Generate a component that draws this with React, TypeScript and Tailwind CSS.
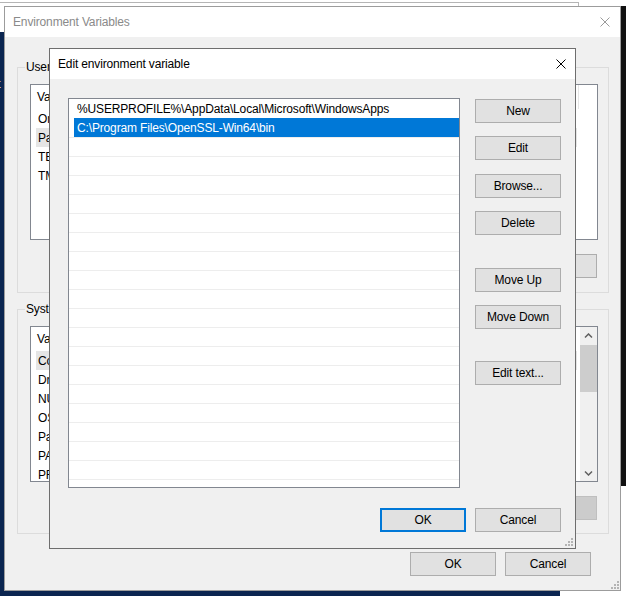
import React from 'react'

type Variant = 'normal' | 'default' | 'disabled'

function Button({ label, variant = 'normal', className = '' }: { label: string; variant?: Variant; className?: string }) {
  const look =
    variant === 'default'
      ? 'border-2 border-[#0078d7] bg-[#e1e1e1]'
      : variant === 'disabled'
        ? 'border border-[#bfbfbf] bg-[#cccccc] text-[#838383]'
        : 'border border-[#adadad] bg-[#e1e1e1]'
  return (
    <button
      type="button"
      className={`flex h-[24px] w-[86px] shrink-0 items-center justify-center whitespace-nowrap ${look} ${className}`}
    >
      {label}
    </button>
  )
}

function CloseIcon({ color }: { color: string }) {
  return (
    <svg width="10" height="10" viewBox="0 0 10 10" className="block">
      <path d="M0.5 0.5L9.5 9.5M9.5 0.5L0.5 9.5" stroke={color} strokeWidth="1" fill="none" />
    </svg>
  )
}

function Grip() {
  const dots = [
    [6, 0],
    [3, 3],
    [6, 3],
    [0, 6],
    [3, 6],
    [6, 6],
  ]
  return (
    <svg width="8" height="8" viewBox="0 0 8 8" className="block">
      {dots.map(([x, y]) => (
        <rect key={`${x}-${y}`} x={x} y={y} width="2" height="2" fill="#b4b4b4" />
      ))}
    </svg>
  )
}

function Chevron({ down = false }: { down?: boolean }) {
  return (
    <svg width="9" height="6" viewBox="0 0 9 6" className="block">
      <path d={down ? 'M1 1.5L4.5 5L8 1.5' : 'M1 4.5L4.5 1L8 4.5'} stroke="#606060" strokeWidth="1.5" fill="none" />
    </svg>
  )
}

const userVars = ['OneDrive', 'Path', 'TEMP', 'TMP']
const systemVars = ['ComSpec', 'DriverData', 'NUMBER_OF_PROCESSORS', 'OS', 'Path', 'PATHEXT', 'PROCESSOR_ARCHITECTURE']

function VarList({ items, highlight, scroll = false }: { items: string[]; highlight: number; scroll?: boolean }) {
  return (
    <div className="flex h-[156px] w-[568px] overflow-hidden border border-[#828790] bg-white">
      <div className="flex flex-1 flex-col">
        <div className="flex h-[24px] shrink-0 items-center pl-[6px]">
          <span className="w-[140px]">Variable</span>
          <span className="flex-1">Value</span>
          <span className="mr-[18px] h-full w-px bg-[#e5e5e5]" />
        </div>
        {items.map((name, i) => (
          <div key={name + i} className="flex h-[19px] shrink-0 pl-[5px]">
            <div className={`flex w-[541px] items-center pl-[2px] ${i === highlight ? 'bg-[#e5e5e5]' : ''}`}>{name}</div>
          </div>
        ))}
      </div>
      {scroll && (
        <div className="flex w-[17px] shrink-0 flex-col bg-[#f0f0f0]">
          <div className="flex h-[17px] items-center justify-center">
            <Chevron />
          </div>
          <div className="mt-px h-[47px] bg-[#cdcdcd]" />
          <div className="flex-1" />
          <div className="flex h-[17px] items-center justify-center">
            <Chevron down />
          </div>
        </div>
      )}
    </div>
  )
}

function GroupBox({ label, items, highlight, scroll, deleteDisabled, className = '' }: {
  label: string
  items: string[]
  highlight: number
  scroll?: boolean
  deleteDisabled?: boolean
  className?: string
}) {
  return (
    <div className={`mr-[11px] border border-[#dcdcdc] pl-[12px] pr-[10px] ${className}`}>
      <div className="-mt-[9px] ml-[-5px] w-fit bg-[#f0f0f0] px-px leading-4">{label}</div>
      <div className="mt-[9px]">
        <VarList items={items} highlight={highlight} scroll={scroll} />
      </div>
      <div className="mt-[14px] flex justify-end gap-[9px] pr-px">
        <Button label="New..." />
        <Button label="Edit..." />
        <Button label="Delete" variant={deleteDisabled ? 'disabled' : 'normal'} />
      </div>
    </div>
  )
}

const pathRows = ['%USERPROFILE%\\AppData\\Local\\Microsoft\\WindowsApps', 'C:\\Program Files\\OpenSSL-Win64\\bin']

export default function App() {
  const rows = Array.from({ length: 21 }, (_, i) => pathRows[i] ?? '')
  return (
    <div className="relative h-[596px] w-[626px] overflow-hidden bg-white font-['Liberation_Sans',sans-serif] text-[12px] leading-4 tracking-[-0.15px] text-black">
      {/* window behind */}
      <div className="absolute left-[-2px] top-[2px] h-[40px] w-[581px] border border-[#b5b5b5] bg-white" />
      {/* desktop edges */}
      <div className="absolute left-0 top-[32px] h-[564px] w-[4px] overflow-hidden bg-[#0b2550]">
        <span className="ml-[-3px] mt-[44px] block text-[13px] leading-4 text-white">t</span>
      </div>
      <div className="absolute bottom-0 left-0 h-[6px] w-[560px] bg-[#0b2550]" />
      <div className="absolute left-[621px] top-[6px] h-[480px] w-[5px] bg-[#111111]" />

      {/* Environment Variables */}
      <div className="absolute left-[4px] top-[6px] flex h-[585px] w-[617px] flex-col border border-[#9c9c9c] bg-[#f0f0f0]">
        <div className="flex h-[30px] shrink-0 items-center justify-between bg-white pl-[8px] pr-[10px] text-[#8a8a8a]">
          <span>Environment Variables</span>
          <CloseIcon color="#9a9a9a" />
        </div>
        <div className="relative flex flex-1 flex-col pl-[12px] pt-[30px]">
          <GroupBox label="User variables for Administrator" items={userVars} highlight={1} className="pb-[14px]" />
          <GroupBox
            label="System variables"
            items={systemVars}
            highlight={0}
            scroll
            deleteDisabled
            className="mt-[16px] pb-[13px]"
          />
          <div className="mt-[18px] flex justify-end gap-[9px] pr-[29px]">
            <Button label="OK" />
            <Button label="Cancel" />
          </div>
          <div className="absolute bottom-[1px] right-[1px]">
            <Grip />
          </div>
        </div>
      </div>

      {/* Edit environment variable */}
      <div className="absolute left-[49px] top-[48px] flex h-[501px] w-[527px] flex-col border border-[#6e6e6e] bg-[#f0f0f0]">
        <div className="flex h-[30px] shrink-0 items-center justify-between bg-white pl-[8px] pr-[9px]">
          <span>Edit environment variable</span>
          <CloseIcon color="#000000" />
        </div>
        <div className="relative flex flex-1 flex-col pl-[18px] pt-[19px]">
          <div className="flex">
            <div className="flex h-[390px] w-[392px] flex-col overflow-hidden border border-[#828790] bg-white">
              {rows.map((text, i) => (
                <div
                  key={i}
                  className={`flex h-[19px] shrink-0 ${i >= 2 ? 'border-t border-[#ededed]' : ''}`}
                >
                  <div
                    className={`ml-[5px] flex flex-1 items-center whitespace-nowrap pl-[3px] ${i === 1 ? 'bg-[#0078d7] text-white' : ''}`}
                  >
                    {text}
                  </div>
                </div>
              ))}
            </div>
            <div className="ml-[15px] flex flex-col pt-px">
              <Button label="New" />
              <Button label="Edit" className="mt-[13px]" />
              <Button label="Browse..." className="mt-[14px]" />
              <Button label="Delete" className="mt-[13px]" />
              <Button label="Move Up" className="mt-[33px]" />
              <Button label="Move Down" className="mt-[13px]" />
              <Button label="Edit text..." className="mt-[32px]" />
            </div>
          </div>
          <div className="mt-[20px] flex justify-end gap-[9px] pr-[14px]">
            <Button label="OK" variant="default" />
            <Button label="Cancel" />
          </div>
          <div className="absolute bottom-[2px] right-[2px]">
            <Grip />
          </div>
        </div>
      </div>
    </div>
  )
}
